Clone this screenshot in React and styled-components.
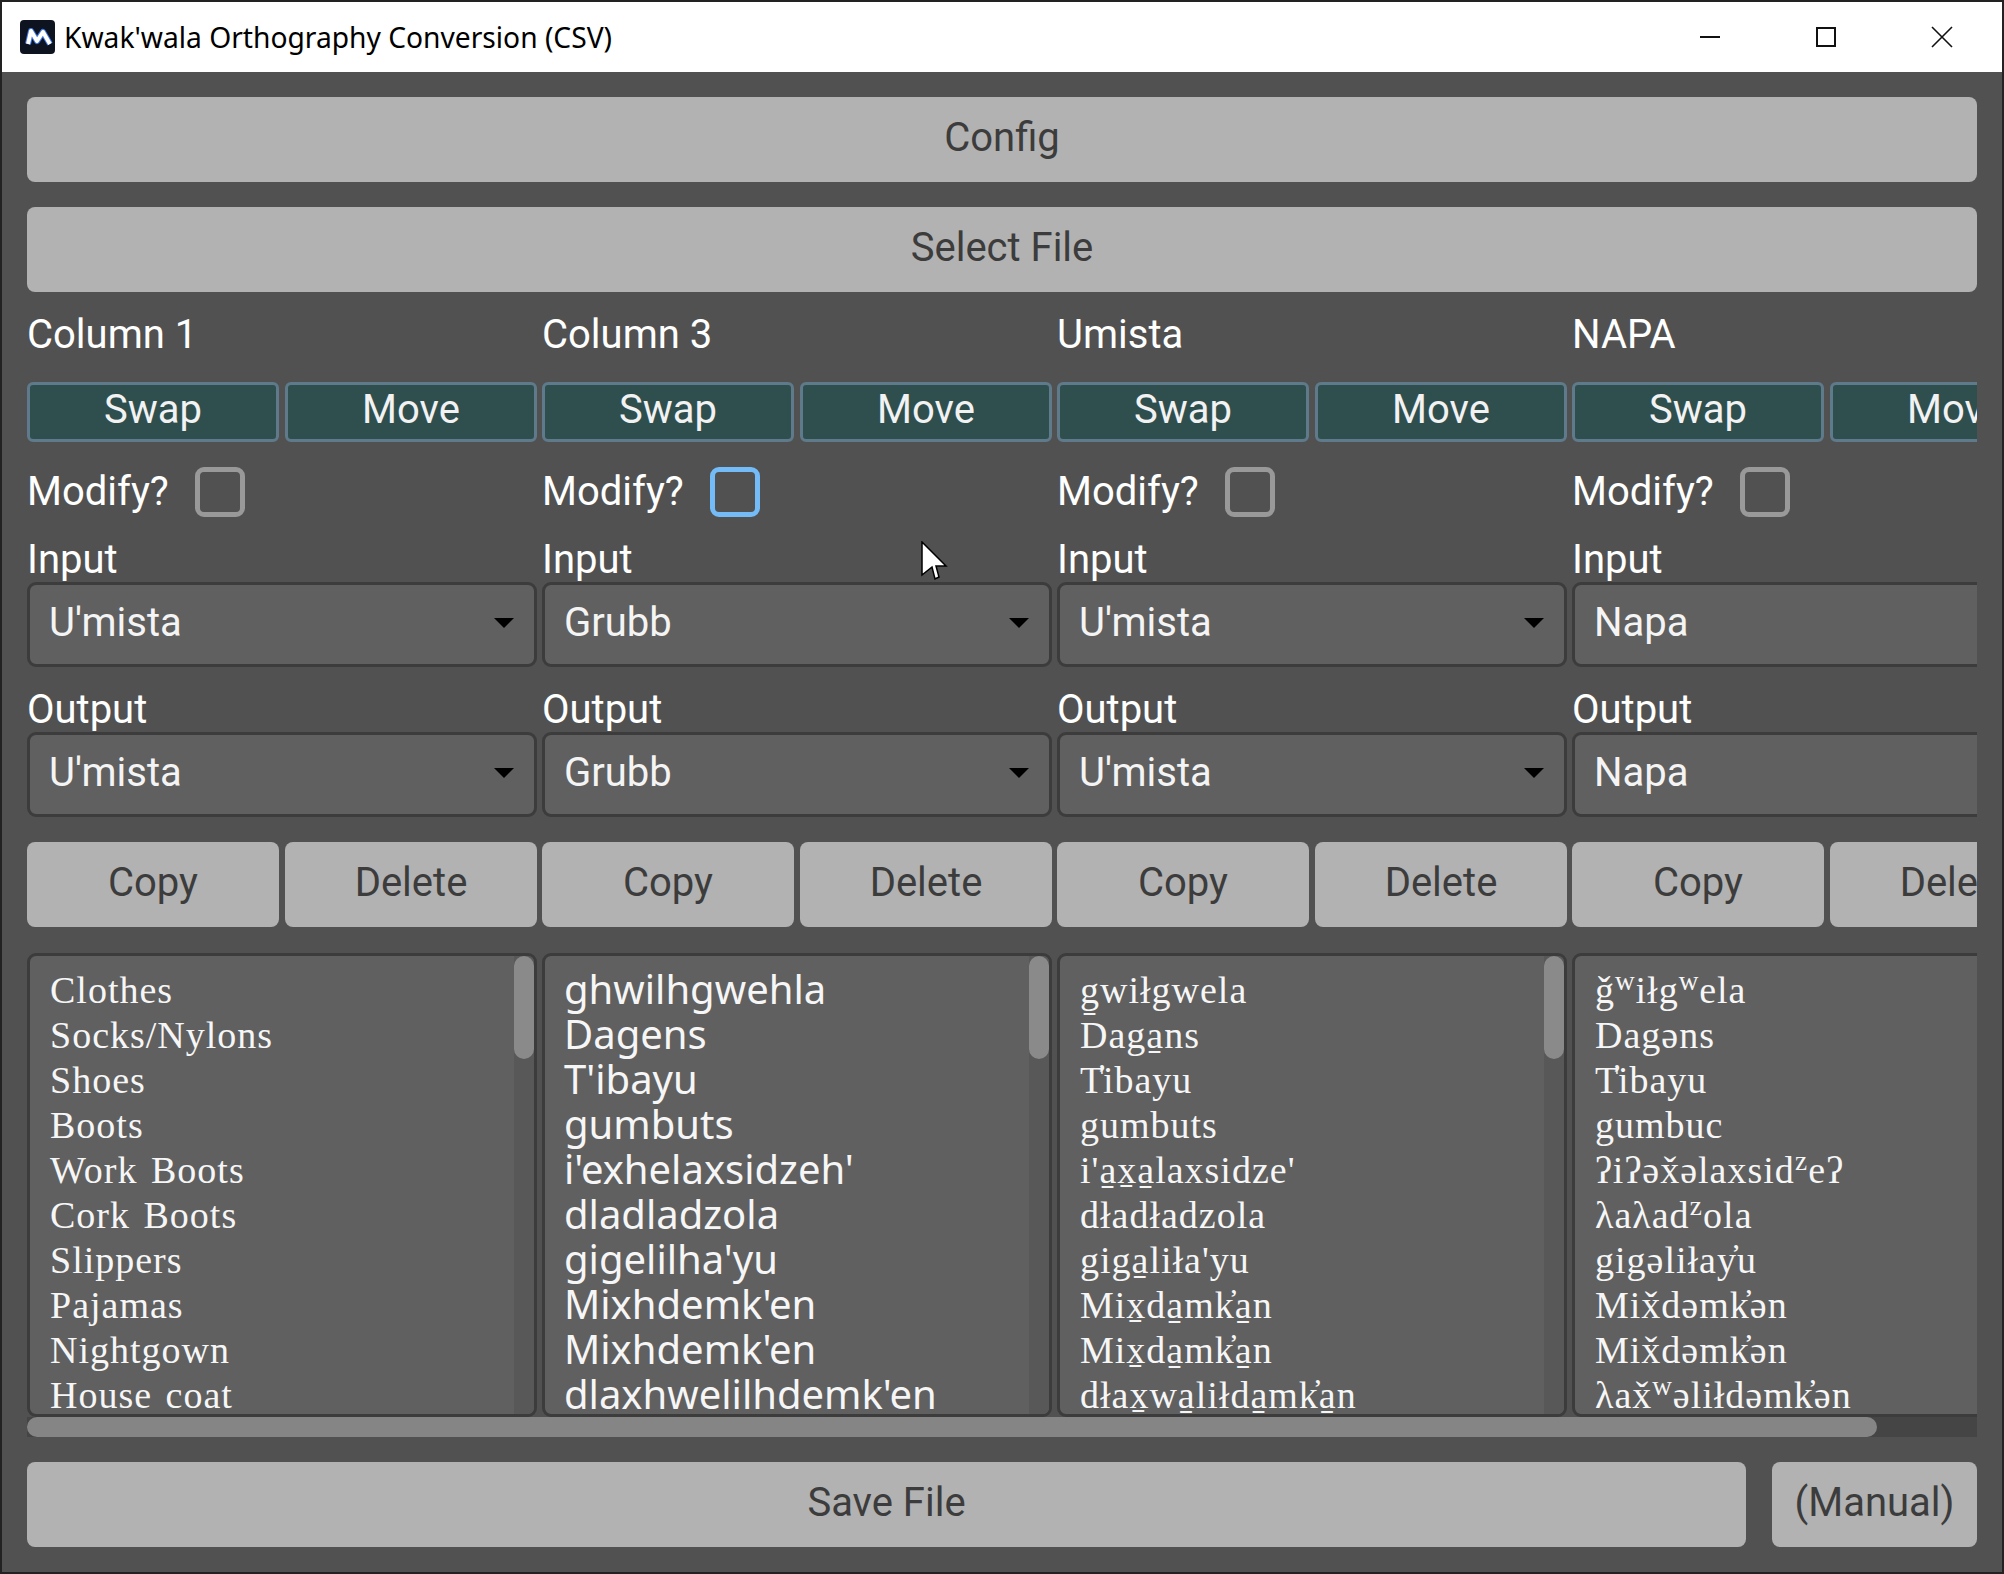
import React from 'react';
import styled, { createGlobalStyle } from 'styled-components';

const GlobalStyle = createGlobalStyle`
  html, body {
    margin: 0;
    padding: 0;
    background: #222;
  }
  * {
    box-sizing: border-box;
  }
`;

const Window = styled.div`
  position: relative;
  width: 2004px;
  height: 1574px;
  border: 2px solid #222;
  display: flex;
  flex-direction: column;
  overflow: hidden;
  background: #515151;
  font-family: Roboto, sans-serif;
`;

const TitleBar = styled.div`
  height: 70px;
  flex: none;
  background: #fff;
  display: flex;
  align-items: center;
  padding: 0 2px 0 18px;
`;

const TitleText = styled.div`
  margin-left: 9px;
  flex: 1;
  font-family: 'Noto Sans', sans-serif;
  font-size: 28.2px;
  color: #000;
  white-space: nowrap;
`;

const WinButton = styled.div`
  width: 116px;
  height: 70px;
  display: flex;
  align-items: center;
  justify-content: center;
`;

const Body = styled.div`
  flex: 1;
  display: flex;
  flex-direction: column;
  padding: 25px;
  min-height: 0;
`;

const GreyButton = styled.button`
  border: 0;
  padding: 0 0 5px;
  height: 85px;
  width: ${(p) => (p.$w ? `${p.$w}px` : 'auto')};
  flex: ${(p) => (p.$w ? 'none' : 1)};
  background: #b2b2b2;
  color: #3c3c3c;
  border-radius: 8px;
  font-family: Roboto, sans-serif;
  font-size: 40px;
  white-space: nowrap;
`;

const FullRow = styled.div`
  display: flex;
  margin-bottom: ${(p) => p.$mb || 0}px;
  gap: ${(p) => p.$gap || 0}px;
`;

const Scroller = styled.div`
  width: 1950px;
  flex: none;
  overflow: hidden;
`;

const HTrack = styled.div`
  width: 1950px;
  height: 20px;
  flex: none;
  margin-bottom: 25px;
  background: #454545;
`;

const HThumb = styled.div`
  width: ${(p) => p.$w}px;
  height: 20px;
  background: #858585;
  border-radius: 10px;
`;

const Columns = styled.div`
  display: flex;
  gap: 5px;
  width: 2055px;
`;

const Column = styled.div`
  width: 510px;
  flex: none;
  display: flex;
  flex-direction: column;
`;

const ColumnTitle = styled.div`
  height: 84px;
  margin-bottom: 6px;
  display: flex;
  align-items: center;
  color: #fff;
  font-size: 40px;
`;

const Pair = styled.div`
  display: flex;
  gap: 6px;
  margin-top: ${(p) => p.$mt || 0}px;
`;

const TealButton = styled.button`
  flex: 1;
  height: 60px;
  padding: 0 0 5px;
  background: #2f4f4f;
  border: 3px solid #5f7a8a;
  border-radius: 6px;
  color: #f2f2f2;
  font-family: Roboto, sans-serif;
  font-size: 40px;
`;

const ModifyRow = styled.div`
  margin-top: 25px;
  height: 50px;
  display: flex;
  align-items: center;
  gap: 26px;
  color: #fff;
  font-size: 40px;
`;

const ModifyText = styled.span`
  margin-bottom: 2px;
`;

const Check = styled.span`
  width: 50px;
  height: 50px;
  border: 5px solid ${(p) => (p.$focus ? '#74bcf8' : '#999')};
  border-radius: 9px;
`;

const FieldLabel = styled.div`
  height: 65px;
  display: flex;
  align-items: flex-end;
  color: #fff;
  font-size: 40px;
  line-height: 44px;
`;

const Select = styled.div`
  height: 85px;
  border: 3px solid #3c3c3c;
  border-radius: 9px;
  background: #606060;
  color: #f4f4f4;
  font-size: 40px;
  display: flex;
  align-items: center;
  justify-content: space-between;
  padding: 0 20px 5px 19px;
`;

const Arrow = styled.span`
  width: 0;
  height: 0;
  margin-top: 2px;
  border-left: 10px solid transparent;
  border-right: 10px solid transparent;
  border-top: 10px solid #000;
`;

const ListBox = styled.div`
  margin-top: 26px;
  height: 464px;
  border: 3px solid #3c3c3c;
  border-radius: 9px;
  background: #606060;
  overflow: hidden;
  display: flex;
`;

const ListLines = styled.div`
  flex: 1;
  min-width: 0;
  overflow: hidden;
  padding: ${(p) => (p.$sans ? '10px 0 0 19px' : '12px 0 0 20px')};
  color: #f6f6f6;
  font-family: ${(p) => (p.$sans ? "'Noto Sans', sans-serif" : "'Liberation Serif', serif")};
  font-size: ${(p) => (p.$sans ? 40 : 38)}px;
  letter-spacing: ${(p) => (p.$sans ? 0 : 1)}px;
  word-spacing: ${(p) => (p.$sans ? 0 : 3)}px;
  line-height: 45px;
  white-space: nowrap;
`;

const Modifier = styled.span`
  font-size: 1.2em;
  line-height: 0;
`;

const VTrack = styled.div`
  width: 20px;
  flex: none;
  background: #585858;
`;

const VThumb = styled.div`
  height: 103px;
  background: #8a8a8a;
  border-radius: 10px;
`;

const Cursor = styled.svg`
  position: absolute;
  left: 919px;
  top: 539px;
`;

const columns = [
  {
    title: 'Column 1',
    input: "U'mista",
    lines: ['Clothes', 'Socks/Nylons', 'Shoes', 'Boots', 'Work Boots', 'Cork Boots', 'Slippers', 'Pajamas', 'Nightgown', 'House coat'],
  },
  {
    title: 'Column 3',
    input: 'Grubb',
    focus: true,
    sans: true,
    lines: ['ghwilhgwehla', 'Dagens', "T'ibayu", 'gumbuts', "i'exhelaxsidzeh'", 'dladladzola', "gigelilha'yu", "Mixhdemk'en", "Mixhdemk'en", "dlaxhwelilhdemk'en"],
  },
  {
    title: 'Umista',
    input: "U'mista",
    lines: ['g\u0331wiłgwela', 'Daga\u0331ns', 'T\u0313ibayu', 'gumbuts', "i'a\u0331x\u0331a\u0331laxsidze'", 'dładładzola', "giga\u0331liła'yu", 'Mix\u0331da\u0331mk\u0313a\u0331n', 'Mix\u0331da\u0331mk\u0313a\u0331n', 'dłax\u0331wa\u0331liłda\u0331mk\u0313a\u0331n'],
  },
  {
    title: 'NAPA',
    input: 'Napa',
    lines: ['ǧʷiłgʷela', 'Dagəns', 'T\u0313ibayu', 'gumbuc', 'ʔiʔəx\u030Cəlaxsidᶻeʔ', 'λaλadᶻola', 'gigəliłay\u0313u', 'Mix\u030Cdəmk\u0313ən', 'Mix\u030Cdəmk\u0313ən', 'λax\u030Cʷəliłdəmk\u0313ən'],
  },
];

// the raised letters come out too small in the serif, so they get their own span
function ListLine({ text }) {
  return (
    <div>
      {text.split(/([ʷᶻ])/).map((part, i) =>
        i % 2 ? <Modifier key={i}>{part}</Modifier> : part
      )}
    </div>
  );
}

function AppLogo() {
  const zigzag = 'M8 24 L11 11 L17 21 L23 12 L30 24';
  return (
    <svg width="35" height="34" viewBox="0 0 35 34">
      <rect width="35" height="34" rx="4" fill="#0e1320" />
      <path d={zigzag} fill="none" stroke="#3f78e8" strokeWidth="6" strokeLinejoin="round" />
      <path d={zigzag} fill="none" stroke="#fff" strokeWidth="4" strokeLinejoin="round" />
    </svg>
  );
}

function WindowIcon({ kind }) {
  return (
    <svg width="22" height="22" viewBox="0 0 22 22" fill="none" stroke="#111" strokeWidth="2">
      {kind === 'min' && <path d="M1 11 H21" />}
      {kind === 'max' && <rect x="2" y="2" width="18" height="18" />}
      {kind === 'close' && <path d="M1 1 L21 21 M21 1 L1 21" strokeWidth="1.6" />}
    </svg>
  );
}

function ColumnCard({ col }) {
  return (
    <Column>
      <ColumnTitle>{col.title}</ColumnTitle>
      <Pair>
        <TealButton>Swap</TealButton>
        <TealButton>Move</TealButton>
      </Pair>
      <ModifyRow>
        <ModifyText>Modify?</ModifyText>
        <Check $focus={col.focus} />
      </ModifyRow>
      <FieldLabel>Input</FieldLabel>
      <Select>
        {col.input}
        <Arrow />
      </Select>
      <FieldLabel>Output</FieldLabel>
      <Select>
        {col.input}
        <Arrow />
      </Select>
      <Pair $mt={25}>
        <GreyButton>Copy</GreyButton>
        <GreyButton>Delete</GreyButton>
      </Pair>
      <ListBox>
        <ListLines $sans={col.sans}>
          {col.lines.map((line, i) => (
            <ListLine key={i} text={line} />
          ))}
        </ListLines>
        <VTrack>
          <VThumb />
        </VTrack>
      </ListBox>
    </Column>
  );
}

export default function App() {
  return (
    <>
      <GlobalStyle />
      <Window>
        <TitleBar>
          <AppLogo />
          <TitleText>Kwak'wala Orthography Conversion (CSV)</TitleText>
          <WinButton><WindowIcon kind="min" /></WinButton>
          <WinButton><WindowIcon kind="max" /></WinButton>
          <WinButton><WindowIcon kind="close" /></WinButton>
        </TitleBar>
        <Body>
          <FullRow $mb={25}>
            <GreyButton>Config</GreyButton>
          </FullRow>
          <FullRow>
            <GreyButton>Select File</GreyButton>
          </FullRow>
          <Scroller>
            <Columns>
              {columns.map((col) => (
                <ColumnCard key={col.title} col={col} />
              ))}
            </Columns>
          </Scroller>
          <HTrack>
            <HThumb $w={1850} />
          </HTrack>
          <FullRow $gap={26}>
            <GreyButton>Save File</GreyButton>
            <GreyButton $w={205}>(Manual)</GreyButton>
          </FullRow>
        </Body>
        <Cursor width="28" height="42" viewBox="-1 -1 28 42">
          <path d="M0 0 L0 33 L10 25 L13 37 L17 35 L14 24 L24 24 Z" fill="#fff" stroke="#000" strokeWidth="1.5" />
        </Cursor>
      </Window>
    </>
  );
}
